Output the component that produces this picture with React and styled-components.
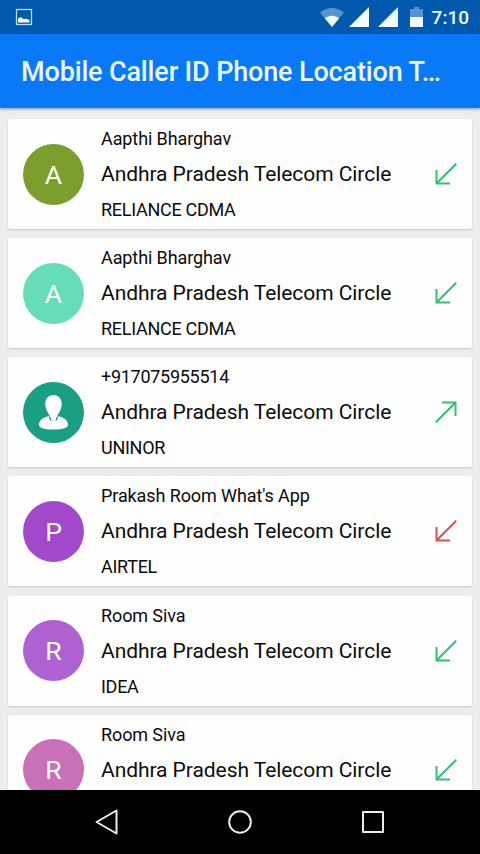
import styled, { createGlobalStyle } from "styled-components";

const GlobalStyle = createGlobalStyle`
  * {
    box-sizing: border-box;
  }

  body {
    margin: 0;
    background: #ededed;
    font-family: Roboto, "Liberation Sans", sans-serif;
  }
`;

const Screen = styled.div`
  display: flex;
  flex-direction: column;
  width: 480px;
  height: 854px;
  overflow: hidden;
  background: #ededed;
`;

const StatusBar = styled.header`
  display: flex;
  flex: none;
  align-items: center;
  justify-content: space-between;
  height: 34px;
  padding: 0 11px 0 15px;
  background: #0059ac;
  color: #f0faff;
`;

const StatusIcons = styled.div`
  display: flex;
  align-items: center;
`;

const StatusSvg = styled.svg`
  display: block;
  margin-right: ${(props) => props.$gap || 0}px;
`;

const Clock = styled.span`
  font-size: 19px;
  font-weight: 500;
  line-height: 35px;
`;

const AppBar = styled.div`
  display: flex;
  flex: none;
  align-items: center;
  height: 74px;
  padding: 2px 36px 0 21px;
  background: #0a79f8;
  box-shadow: 0 1px 3px rgba(40, 70, 150, 0.55);
  z-index: 1;
`;

const Title = styled.h1`
  margin: 0;
  color: #e9f7ff;
  font-size: 27px;
  font-weight: 500;
  letter-spacing: -0.15px;
  line-height: 36px;
  white-space: nowrap;
`;

const CallList = styled.main`
  display: flex;
  flex: 1;
  flex-direction: column;
  gap: 9.15px;
  min-height: 0;
  padding: 11px 8px 0;
  overflow: hidden;
`;

const Card = styled.article`
  display: flex;
  flex: none;
  align-items: center;
  height: 110px;
  padding: 0 15px;
  border-radius: 2px;
  background: #fefefe;
  box-shadow: 0 1px 2px rgba(0, 0, 0, 0.16);
`;

const Avatar = styled.div`
  display: flex;
  flex: none;
  align-items: center;
  justify-content: center;
  width: 61px;
  height: 61px;
  margin-right: 17px;
  border-radius: 50%;
  background: ${(props) => props.$color};
  color: #fbfff5;
  font-size: 26.5px;
  line-height: 63px;
`;

const Details = styled.div`
  display: flex;
  flex: 1;
  flex-direction: column;
  height: 110px;
  padding-top: 8px;
  color: #0c0c0c;
  white-space: nowrap;
`;

const Line = styled.span`
  font-size: 18px;
  letter-spacing: ${(props) => (props.$tight ? "-0.28px" : "-0.1px")};
  line-height: 24px;
`;

const Circle = styled.span`
  margin: 11px 0;
  font-size: 21px;
  letter-spacing: -0.06px;
  line-height: 25px;
`;

const Arrow = styled.svg`
  display: block;
  flex: none;
  width: 22px;
  height: 22px;
  transform: ${(props) => (props.$outgoing ? "rotate(180deg)" : "none")};
`;

const NavBar = styled.nav`
  display: flex;
  flex: none;
  align-items: center;
  justify-content: space-between;
  height: 64px;
  padding: 0 94px;
  background: #000;
`;

const NavIcon = styled.svg`
  display: block;
  width: 26px;
  height: 26px;
  fill: none;
  stroke: #ececec;
  stroke-width: 2;
  stroke-linejoin: round;
`;

const calls = [
  { id: 1, name: "Aapthi Bharghav", operator: "RELIANCE CDMA", letter: "A", color: "#7b9e2f" },
  { id: 2, name: "Aapthi Bharghav", operator: "RELIANCE CDMA", letter: "A", color: "#66dcb9" },
  { id: 3, name: "+917075955514", operator: "UNINOR", color: "#1a9f85", outgoing: true },
  { id: 4, name: "Prakash Room What's App", operator: "AIRTEL", letter: "P", color: "#a148cb", missed: true },
  { id: 5, name: "Room Siva", operator: "IDEA", letter: "R", color: "#ae61d0" },
  { id: 6, name: "Room Siva", letter: "R", color: "#c970b8" },
];

const Signal = ({ gap }) => (
  <StatusSvg $gap={gap} width="20" height="20" viewBox="0 0 20 20">
    <path d="M20 0v20H0z" fill="currentColor" />
  </StatusSvg>
);

const Person = () => (
  <svg width="61" height="61" viewBox="0 0 61 61" fill="#fff">
    <path d="M30.5 13c5 0 8.200 3.600 8.200 9 0 5-2.600 8.500-4.200 11.500-.6 1.100-.6 2.700-.4 4.500h-7.200c.2-1.800.2-3.400-.4-4.500-1.600-3-4.200-6.500-4.200-11.500 0-5.400 3.200-9 8.200-9z" />
    <path d="M26.400 34.200c-6 .6-10.400 4-10.400 8.300 0 3.400 4.500 5 14.500 5s14.500-1.600 14.500-5c0-4.300-4.400-7.700-10.400-8.300l-.6 4h-7z" />
    <path d="M26.600 35l1.200 3.200M34.400 35l-1.200 3.200" stroke="#1a9f85" strokeWidth="1.300" />
  </svg>
);

function CallCard({ call }) {
  return (
    <Card>
      <Avatar $color={call.color}>{call.letter || <Person />}</Avatar>
      <Details>
        <Line $tight={!call.letter}>{call.name}</Line>
        <Circle>Andhra Pradesh Telecom Circle</Circle>
        {call.operator && <Line $tight>{call.operator}</Line>}
      </Details>
      <Arrow $outgoing={call.outgoing} viewBox="0 0 22 22">
        <path
          d="M21.200 0.800L1.500 20.500M1.500 7v13.500H15"
          fill="none"
          stroke={call.missed ? "#dc5148" : "#35be74"}
          strokeWidth="2"
        />
      </Arrow>
    </Card>
  );
}

function App() {
  return (
    <Screen>
      <GlobalStyle />
      <StatusBar>
        <StatusSvg width="18" height="18" viewBox="0 0 18 18">
          <rect x="1.500" y="1.500" width="15" height="15" fill="none" stroke="#b9dcf5" strokeWidth="1.300" />
          <path d="M3 14.500v-3.300c.6-1.500 1.700-2.200 2.800-2 1.100.1 1.600 1.300 2.700 1.800 1 .3 1.700-.5 2.800-.2 1.400.3 2.300.8 3.300 1.700v2z" fill="#fff" />
        </StatusSvg>
        <StatusIcons>
          <StatusSvg $gap={5} width="24" height="19" viewBox="0 0 24 19">
            <path d="M0 4.500C7-1.500 17-1.500 24 4.500L12 19z" fill="#5795cc" />
            <path d="M4.800 10.300C9 6.800 15 6.800 19.200 10.300L12 19z" fill="currentColor" />
          </StatusSvg>
          <Signal gap={9} />
          <Signal gap={12} />
          <StatusSvg $gap={9} width="13" height="20" viewBox="0 0 13 20">
            <path d="M4 0h5v2h4v8H0V2h4z" fill="#5795cc" />
            <path d="M0 10h13v10H0z" fill="currentColor" />
          </StatusSvg>
          <Clock>7:10</Clock>
        </StatusIcons>
      </StatusBar>
      <AppBar>
        <Title>Mobile Caller ID Phone Location T…</Title>
      </AppBar>
      <CallList>
        {calls.map((call) => (
          <CallCard key={call.id} call={call} />
        ))}
      </CallList>
      <NavBar>
        <NavIcon viewBox="0 0 26 26">
          <path d="M2.500 13L22.500 1.500v23z" />
        </NavIcon>
        <NavIcon viewBox="0 0 26 26">
          <circle cx="13" cy="13" r="10.800" />
        </NavIcon>
        <NavIcon viewBox="0 0 26 26">
          <rect x="3" y="3" width="20" height="20" />
        </NavIcon>
      </NavBar>
    </Screen>
  );
}

export default App;
